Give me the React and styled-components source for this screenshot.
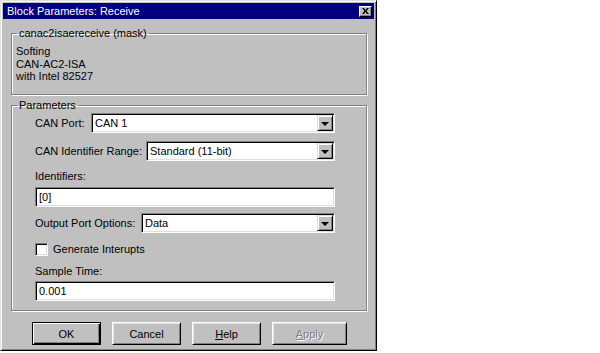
import React from 'react';
import styled, { createGlobalStyle } from 'styled-components';

const Global = createGlobalStyle`
  body {
    margin: 0;
    background: #ffffff;
  }
`;

const Window = styled.div`
  box-sizing: border-box;
  width: 377px;
  height: 351px;
  padding: 2px;
  background: #c0c0c0;
  border: 1px solid;
  border-color: #dfdfdf #000000 #000000 #dfdfdf;
  box-shadow: inset 1px 1px 0 #ffffff, inset -1px -1px 0 #808080;
  display: flex;
  flex-direction: column;
  font-family: "Liberation Sans", Arial, sans-serif;
  font-size: 11px;
  color: #000000;
`;

const TitleBar = styled.div`
  height: 16px;
  background: #000080;
  color: #ffffff;
  display: flex;
  align-items: center;
  justify-content: space-between;
  padding: 0 2px 0 4px;
  font-size: 11px;
`;

const CloseBtn = styled.div`
  box-sizing: border-box;
  width: 13px;
  height: 11px;
  background: #c0c0c0;
  border: 1px solid;
  border-color: #ffffff #000000 #000000 #ffffff;
  box-shadow: inset -1px -1px 0 #808080;
  display: flex;
  align-items: center;
  justify-content: center;
`;

const Body = styled.div`
  padding: 0 6px 0 8px;
  display: flex;
  flex-direction: column;
`;

const Group = styled.fieldset`
  box-sizing: border-box;
  margin: ${({ $top }) => $top}px 0 0 0;
  width: 356px;
  height: ${({ $height }) => $height}px;
  padding: ${({ $pad }) => $pad};
  border: 1px solid #808080;
  box-shadow: inset 1px 1px 0 #ffffff, 1px 1px 0 #ffffff;
  min-width: 0;
`;

const Legend = styled.legend`
  padding: 0 2px;
  margin-left: ${({ $left }) => $left}px;
  line-height: 14px;
  font-size: 11px;
`;

const Info = styled.div`
  line-height: 12.5px;
`;

const Row = styled.div`
  display: flex;
  align-items: center;
  justify-content: space-between;
  margin-top: ${({ $top }) => $top}px;
`;

const Label = styled.div`
  line-height: 13px;
  margin-top: ${({ $top }) => $top || 0}px;
`;

const Sunken = styled.div`
  box-sizing: border-box;
  width: ${({ $width }) => $width}px;
  height: 20px;
  background: #ffffff;
  border: 1px solid;
  border-color: #808080 #ffffff #ffffff #808080;
  box-shadow: inset 1px 1px 0 #000000, inset -1px -1px 0 #dfdfdf;
  padding: 2px 2px 2px 3px;
  display: flex;
  align-items: center;
  justify-content: space-between;
  margin-top: ${({ $top }) => $top || 0}px;
`;

const Value = styled.span`
  line-height: 14px;
`;

const DropBtn = styled.div`
  box-sizing: border-box;
  width: 16px;
  height: 16px;
  background: #c0c0c0;
  border: 1px solid;
  border-color: #dfdfdf #000000 #000000 #dfdfdf;
  box-shadow: inset 1px 1px 0 #ffffff, inset -1px -1px 0 #808080;
  display: flex;
  align-items: center;
  justify-content: center;
  margin-right: -1px;
`;

const Arrow = styled.span`
  width: 0;
  height: 0;
  border-left: 4px solid transparent;
  border-right: 4px solid transparent;
  border-top: 4px solid #000000;
  margin-top: 1px;
`;

const CheckRow = styled.div`
  display: flex;
  align-items: center;
  gap: 5px;
  margin-top: 10px;
`;

const Box = styled.span`
  box-sizing: border-box;
  width: 13px;
  height: 13px;
  background: #ffffff;
  border: 1px solid;
  border-color: #808080 #ffffff #ffffff #808080;
  box-shadow: inset 1px 1px 0 #000000, inset -1px -1px 0 #dfdfdf;
`;

const Buttons = styled.div`
  display: flex;
  gap: 11px;
  margin: 11px 0 0 21px;
`;

const Button = styled.div`
  box-sizing: border-box;
  width: ${({ $width }) => $width || 69}px;
  height: 23px;
  display: flex;
  align-items: center;
  justify-content: center;
  background: #c0c0c0;
  border: 1px solid;
  border-color: ${({ $default }) =>
    $default ? '#000000' : '#ffffff #000000 #000000 #ffffff'};
  box-shadow: ${({ $default }) =>
    $default
      ? 'inset 1px 1px 0 #ffffff, inset -1px -1px 0 #000000, inset -2px -2px 0 #808080'
      : 'inset 1px 1px 0 #dfdfdf, inset -1px -1px 0 #808080'};
  color: ${({ $disabled }) => ($disabled ? '#808080' : '#000000')};
  text-shadow: ${({ $disabled }) => ($disabled ? '1px 1px 0 #ffffff' : 'none')};
  u {
    text-decoration: underline;
  }
`;

const Select = ({ width, top, value }) => (
  <Sunken $width={width} $top={top}>
    <Value>{value}</Value>
    <DropBtn>
      <Arrow />
    </DropBtn>
  </Sunken>
);

export default function App() {
  return (
    <>
      <Global />
      <Window>
        <TitleBar>
          <span>Block Parameters: Receive</span>
          <CloseBtn>
            <svg width="7" height="6" viewBox="0 0 7 6">
              <path d="M0 0h2l1.5 2L5 0h2L4.5 3 7 6H5L3.5 4 2 6H0l2.5-3z" fill="#000" />
            </svg>
          </CloseBtn>
        </TitleBar>
        <Body>
          <Group $top={7} $height={69} $pad="5px 4px 0 4px">
            <Legend $left={1}>canac2isaereceive (mask)</Legend>
            <Info>
              Softing
              <br />
              CAN-AC2-ISA
              <br />
              with Intel 82527
            </Info>
          </Group>
          <Group $top={3} $height={213} $pad="0 31px 0 23px">
            <Legend $left={-18}>Parameters</Legend>
            <Row $top={1}>
              <Label>CAN Port:</Label>
              <Select width={244} value="CAN 1" />
            </Row>
            <Row $top={8}>
              <Label>CAN Identifier Range:</Label>
              <Select width={189} value="Standard (11-bit)" />
            </Row>
            <Label $top={9}>Identifiers:</Label>
            <Sunken $width={300} $top={4}>
              <Value>[0]</Value>
            </Sunken>
            <Row $top={6}>
              <Label>Output Port Options:</Label>
              <Select width={194} value="Data" />
            </Row>
            <CheckRow>
              <Box />
              <Label>Generate Interupts</Label>
            </CheckRow>
            <Label $top={9}>Sample Time:</Label>
            <Sunken $width={300} $top={3}>
              <Value>0.001</Value>
            </Sunken>
          </Group>
          <Buttons>
            <Button $default>OK</Button>
            <Button>Cancel</Button>
            <Button>
              <span>
                <u>H</u>elp
              </span>
            </Button>
            <Button $width={75} $disabled>
              <span>
                <u>A</u>pply
              </span>
            </Button>
          </Buttons>
        </Body>
      </Window>
    </>
  );
}
